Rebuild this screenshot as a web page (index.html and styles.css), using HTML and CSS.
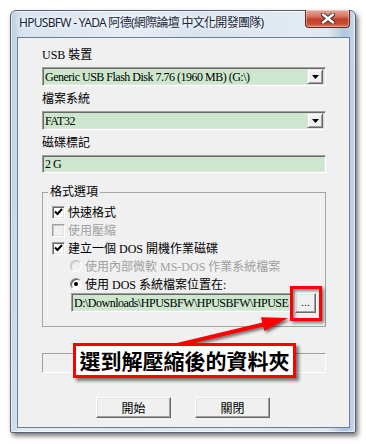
FILE: index.html
```html
<!DOCTYPE html>
<html lang="zh-Hant">
<head>
<meta charset="utf-8">
<title>HPUSBFW</title>
<link rel="stylesheet" href="styles.css">
</head>
<body>
<div class="window">
  <div class="titlebar">
    <span class="title">HPUSBFW - YADA 阿德(網際論壇 中文化開發團隊)</span>
    <div class="close">
      <svg width="14" height="11" viewBox="0 0 14 11"><path d="M2 1.5 L12 9.5 M12 1.5 L2 9.5" stroke="#3b2a2a" stroke-width="4.2" stroke-linecap="round"/><path d="M2 1.5 L12 9.5 M12 1.5 L2 9.5" stroke="#fff" stroke-width="2.4" stroke-linecap="round"/></svg>
    </div>
  </div>
  <div class="client">
    <div class="label">USB 裝置</div>
    <div class="field combo">
      <span class="val">Generic USB Flash Disk 7.76 (1960 MB) (G:\)</span>
      <span class="drop"><svg width="7" height="4" viewBox="0 0 7 4"><path d="M0 0 H7 L3.5 4 Z" fill="#000"/></svg></span>
    </div>
    <div class="label">檔案系統</div>
    <div class="field combo">
      <span class="val">FAT32</span>
      <span class="drop"><svg width="7" height="4" viewBox="0 0 7 4"><path d="M0 0 H7 L3.5 4 Z" fill="#000"/></svg></span>
    </div>
    <div class="label">磁碟標記</div>
    <div class="field edit"><span class="val">2 G</span></div>

    <fieldset class="group">
      <legend>格式選項</legend>
      <div class="opt"><span class="chk"><svg width="9" height="8" viewBox="0 0 9 8"><path d="M1 3.5 L3.5 6 L8 1" fill="none" stroke="#000" stroke-width="2"/></svg></span>快速格式</div>
      <div class="opt disabled"><span class="chk"></span>使用壓縮</div>
      <div class="opt"><span class="chk"><svg width="9" height="8" viewBox="0 0 9 8"><path d="M1 3.5 L3.5 6 L8 1" fill="none" stroke="#000" stroke-width="2"/></svg></span>建立一個 DOS 開機作業磁碟</div>
      <div class="opt sub disabled"><span class="radio"></span>使用內部微軟 MS-DOS 作業系統檔案</div>
      <div class="opt sub"><span class="radio on"></span>使用 DOS 系統檔案位置在:</div>
      <div class="pathrow">
        <div class="field path"><span class="val">D:\Downloads\HPUSBFW\HPUSBFW\HPUSE</span></div>
        <div class="btn browse">...</div>
      </div>
    </fieldset>

    <div class="progress"></div>

    <div class="buttons">
      <div class="btn push">開始</div>
      <div class="btn push">關閉</div>
    </div>

    <svg class="arrow" width="331" height="391" viewBox="0 0 331 391">
      <line x1="152" y1="308.7" x2="247" y2="286" stroke="#f00" stroke-width="4"/>
      <path d="M270 280 L246.3 292.9 L243 279.3 Z" fill="#f00"/>
    </svg>
    <div class="redbox"></div>
    <div class="callout">選到解壓縮後的資料夾</div>
  </div>
</div>
</body>
</html>
```

FILE: styles.css
```css
* { box-sizing: border-box; }
html, body { margin: 0; padding: 0; }
body {
  width: 366px;
  height: 444px;
  overflow: hidden;
  background: #fff;
  font-family: "Liberation Serif", "Noto Sans CJK TC", serif;
  font-size: 12px;
  color: #000;
}

.window {
  margin: 10px 0 0 10px;
  width: 346px;
  height: 423px;
  border: 1px solid #55616e;
  border-radius: 6px 6px 2px 2px;
  padding: 0 5px 4px 6px;
  display: flex;
  flex-direction: column;
  background:
    linear-gradient(100deg, rgba(255,255,255,0) 0%, rgba(255,255,255,.35) 30%, rgba(255,255,255,0) 45%, rgba(255,255,255,.25) 70%, rgba(255,255,255,0) 85%),
    linear-gradient(90deg, #b9cde2 0%, #d6e2ee 3%, #d9e4ef 92%, #a9c2dc 97%, #c7d8ea 100%);
  box-shadow: 2px 3px 5px rgba(0,0,0,.55), inset 0 0 0 1px rgba(255,255,255,.6);
}

.titlebar {
  height: 26px;
  display: flex;
  align-items: flex-start;
}
.title {
  margin: 4px 0 0 2px;
  font-family: "Noto Sans", "Noto Sans CJK TC", sans-serif;
  font-size: 12px;
  letter-spacing: -0.7px;
  line-height: 16px;
  color: #18263c;
  white-space: nowrap;
  text-shadow: 0 0 4px #fff, 0 0 6px rgba(255,255,255,.9);
}
.close {
  margin: -1px 0 0 auto;
  flex: none;
  width: 45px;
  height: 18px;
  border: 1px solid #5e2a22;
  border-top: none;
  border-radius: 0 0 4px 4px;
  background: linear-gradient(180deg, #e9a899 0%, #d77a66 35%, #c2422c 55%, #c84b34 80%, #db7a5c 100%);
  box-shadow: inset 0 0 0 1px rgba(255,255,255,.35);
  display: flex;
  align-items: center;
  justify-content: center;
}

.client {
  position: relative;
  flex: 1;
  border: 1px solid #6f7d8c;
  background: #f0f0f0;
  padding: 10px 23px 0 24px;
  display: flex;
  flex-direction: column;
}

.label {
  height: 14px;
  line-height: 14px;
  margin-bottom: 5px;
  white-space: nowrap;
}
.combo + .label { margin-top: 6px; }

.field {
  position: relative;
  background: #cce7cd;
  border: 1px solid;
  border-color: #a0a0a0 #fff #fff #a0a0a0;
  box-shadow: inset 1px 1px 0 #696969, inset -1px -1px 0 #e3e3e3;
  display: flex;
  align-items: center;
  overflow: hidden;
  white-space: nowrap;
}
.val { padding-left: 2px; line-height: 14px; letter-spacing: -0.5px; }
.combo { height: 19px; }
.edit { height: 18px; }

.drop {
  margin-left: auto;
  margin-right: 2px;
  flex: none;
  width: 16px;
  height: 15px;
  background: #f0f0f0;
  border: 1px solid;
  border-color: #e3e3e3 #696969 #696969 #e3e3e3;
  box-shadow: inset 1px 1px 0 #fff, inset -1px -1px 0 #a0a0a0;
  display: flex;
  align-items: center;
  justify-content: center;
}

.group {
  margin: 12px 0 0 0;
  padding: 0 0 13px 0;
  min-width: 0;
  border: 1px solid #a5a5a5;
}
.group legend {
  margin-left: 5px;
  padding: 0 2px;
  line-height: 14px;
  height: 14px;
}
.opt {
  height: 18px;
  display: flex;
  align-items: center;
  padding-left: 9px;
  gap: 3px;
  white-space: nowrap;
}
.opt:first-of-type { margin-top: 4px; }
.opt.sub { padding-left: 27px; }
.opt.disabled { color: #a0a0a0; }

.chk {
  width: 13px;
  height: 13px;
  background: #fff;
  border: 1px solid;
  border-color: #a0a0a0 #fff #fff #a0a0a0;
  box-shadow: inset 1px 1px 0 #696969, inset -1px -1px 0 #e3e3e3;
  display: flex;
  align-items: center;
  justify-content: center;
}
.disabled .chk { background: #f0f0f0; box-shadow: inset 1px 1px 0 #c8c8c8, inset -1px -1px 0 #e3e3e3; }

.radio {
  width: 12px;
  height: 12px;
  border-radius: 50%;
  background: #fff;
  border: 1px solid;
  border-color: #8a8a8a #fff #fff #8a8a8a;
  box-shadow: inset 1px 1px 0 #5a5a5a;
  display: flex;
  align-items: center;
  justify-content: center;
}
.disabled .radio { background: #f0f0f0; border-color: #c0c0c0 #fff #fff #c0c0c0; box-shadow: inset 1px 1px 0 #d0d0d0; }
.radio.on::after {
  content: "";
  width: 4px;
  height: 4px;
  border-radius: 50%;
  background: #000;
}

.pathrow {
  display: flex;
  align-items: flex-start;
  gap: 4px;
  padding-left: 28px;
  height: 20px;
}
.path { width: 220px; height: 19px; }

.btn {
  background: #f0f0f0;
  border: 1px solid;
  border-color: #fff #696969 #696969 #fff;
  box-shadow: inset -1px -1px 0 #a0a0a0, inset 1px 1px 0 #e3e3e3;
  display: flex;
  align-items: center;
  justify-content: center;
  font-family: "Noto Sans CJK TC", sans-serif;
}
.browse {
  flex: none;
  width: 21px;
  height: 20px;
  font-family: "Liberation Sans", sans-serif;
  font-size: 11px;
  padding-bottom: 2px;
}

.progress {
  margin-top: 26px;
  height: 20px;
  border: 1px solid;
  border-color: #a0a0a0 #fff #fff #a0a0a0;
}

.buttons {
  margin-top: 24px;
  display: flex;
  justify-content: center;
  gap: 24px;
  padding-right: 2px;
}
.push { width: 75px; height: 21px; font-size: 12px; }

.arrow {
  position: absolute;
  left: 0;
  top: 0;
  pointer-events: none;
  filter: drop-shadow(2px 2px 1.5px rgba(0,0,0,.55));
}
.redbox {
  position: absolute;
  left: 272px;
  top: 248px;
  width: 32px;
  height: 35px;
  border: 3px solid #f00;
  box-shadow: 2px 2px 3px rgba(0,0,0,.5), inset 2px 2px 3px rgba(0,0,0,.45);
}
.callout {
  position: absolute;
  left: 55px;
  top: 305px;
  width: 223px;
  height: 35px;
  background: #fff;
  border: 3px solid #f00;
  box-shadow: 3px 3px 3px rgba(0,0,0,.5);
  font-family: "Noto Sans CJK TC", sans-serif;
  font-weight: 700;
  font-size: 21px;
  line-height: 29px;
  text-align: center;
  white-space: nowrap;
}
```
